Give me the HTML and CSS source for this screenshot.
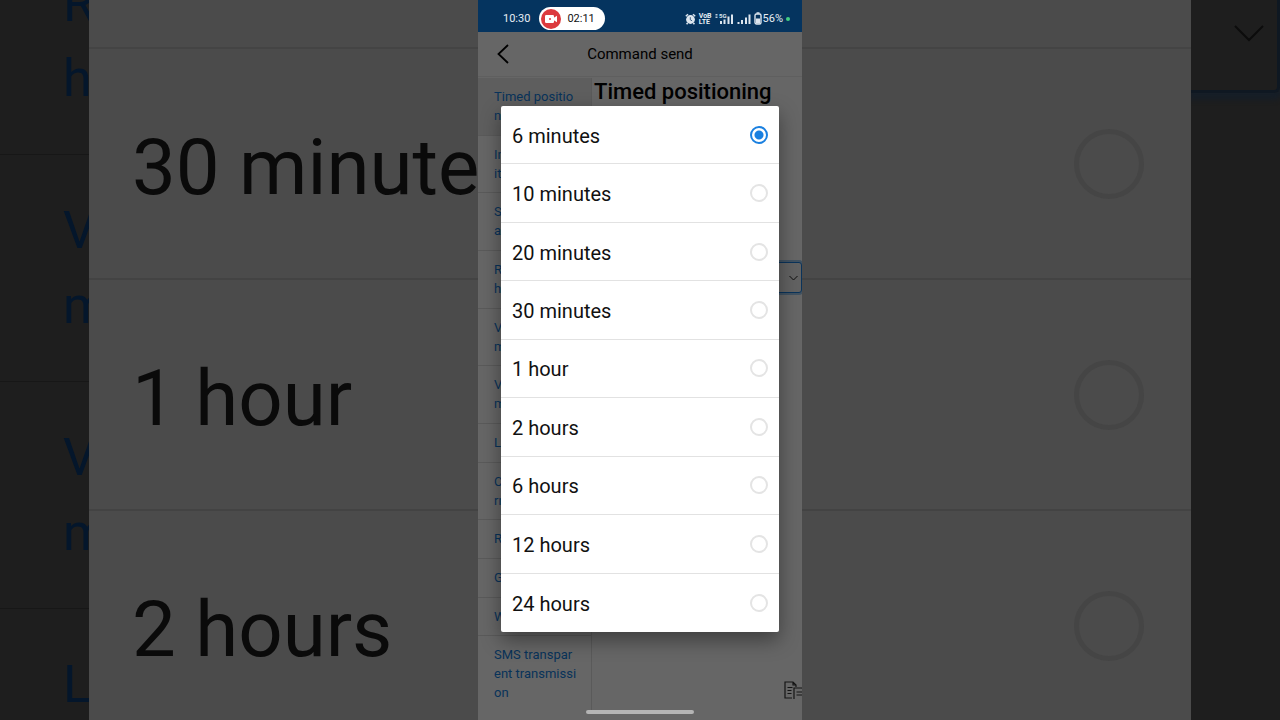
FILE: index.html
```html
<!DOCTYPE html>
<html lang="en">

<head>
    <meta charset="UTF-8">
    <meta name="viewport" content="width=device-width, initial-scale=1.0">
    <title>Command send</title>
    <link rel="stylesheet" href="styles.css">
</head>

<body>
    <div class="backdrop">
        <ul class="backdropMenu">
            <li>R<br>h</li>
            <li>V<br>m</li>
            <li>V<br>m</li>
            <li>L</li>
        </ul>
        <div class="backdropList">
            <div class="backdropTop"></div>
            <label class="backdropRow"><span>30 minutes</span> <input type="radio" class="radio" name="backdrop" disabled></label>
            <label class="backdropRow"><span>1 hour</span> <input type="radio" class="radio" name="backdrop" disabled></label>
            <label class="backdropRow"><span>2 hours</span> <input type="radio" class="radio" name="backdrop" disabled></label>
        </div>
        <div class="backdropSide">
            <div class="backdropSelect">
                <svg width="32" height="32" viewBox="0 0 32 32">
                    <path d="M2 9l14 14L30 9" fill="none" stroke="#0c0c0c" stroke-width="2" />
                </svg>
            </div>
        </div>
    </div>

    <div class="phone">
        <div class="statusBar">
            <span class="time">10:30</span>
            <div class="recording">
                <svg width="20" height="20" viewBox="0 0 20 20">
                    <circle cx="10" cy="10" r="10" fill="#dc3a3e" />
                    <rect x="4" y="6" width="9" height="8" rx="1.2" fill="#fff" />
                    <path d="M12 9.3l4-2.5v6.4l-4-2.5z" fill="#fff" />
                    <circle cx="9" cy="10" r="1" fill="#dc3a3e" />
                </svg>
                <span>02:11</span>
            </div>
            <div class="statusIcons">
                <svg width="11" height="12" viewBox="0 0 11 12">
                    <circle cx="5.5" cy="6.5" r="4.4" fill="#dde6ef" />
                    <path d="M.8 3.2L3 1.2M10.2 3.2L8 1.2M2.6 10l-1 1.3M8.4 10l1 1.3" stroke="#dde6ef" stroke-width="1.5" />
                    <path d="M5.3 4.2v2.6l1.8 1" fill="none" stroke="#3c5f82" stroke-width="1" />
                </svg>
                <span class="volte">VoB<br>LTE</span>
                <svg class="mobile" width="19" height="12" viewBox="0 0 19 12">
                    <path d="M1.5 1v1.5M1.5 3.5V5" stroke="#b9c9d9" stroke-width="2" />
                    <text x="4" y="5" class="network">5G</text>
                    <path d="M6 11V8M9.5 11V6.5M13.5 11V3.5M17 11V1.5" stroke="#dde6ef" stroke-width="2" />
                </svg>
                <svg width="14" height="12" viewBox="0 0 14 12">
                    <path d="M1.5 11V9M5 11V7M9 11V4.5M12.5 11V1.5" stroke="#dde6ef" stroke-width="2" />
                </svg>
                <svg class="battery" width="8" height="13" viewBox="0 0 8 13">
                    <path d="M2.5 1h3" stroke="#dde6ef" stroke-width="1.5" />
                    <rect x="1" y="2" width="6" height="10" rx="1.5" fill="none" stroke="#dde6ef" stroke-width="1.4" />
                    <rect x="2" y="6.5" width="4" height="5" fill="#dde6ef" />
                </svg>
                <span class="percent">56%</span>
                <span class="dot"></span>
            </div>
        </div>

        <header class="navBar">
            <button class="back" aria-label="Back">
                <svg width="12" height="20" viewBox="0 0 12 20">
                    <path d="M11 1L1.5 10 11 19" fill="none" stroke="#000" stroke-width="1.8" />
                </svg>
            </button>
            <span class="title">Command send</span>
        </header>

        <main class="page">
            <nav class="menu">
                <a href="#" class="active">Timed positioning</a>
                <a href="#">In<br>it</a>
                <a href="#">S<br>a</a>
                <a href="#">R<br>h</a>
                <a href="#">V<br>m</a>
                <a href="#">V<br>m</a>
                <a href="#">L</a>
                <a href="#">C<br>rn</a>
                <a href="#">R</a>
                <a href="#">G</a>
                <a href="#">W</a>
                <a href="#">SMS transparent transmission</a>
            </nav>
            <section class="content">
                <h1>Timed positioning</h1>
                <div class="field">
                    <select aria-label="Timed positioning"></select>
                    <svg width="9" height="6" viewBox="0 0 9 6">
                        <path d="M.5 1l4 4 4-4" fill="none" stroke="#222" stroke-width="1" />
                    </svg>
                </div>
                <button class="copy" aria-label="Copy">
                    <svg width="24" height="19" viewBox="0 0 24 19">
                        <path d="M8 17H1V1h8l3 3v2M9 1v3h3M3.5 6.5h5M3.5 9.5h4M3.5 12.5h4M10 18V7h8l4 3v8M12.5 11h7M12.5 14h7"
                            fill="none" stroke="#333" stroke-width="1.2" />
                    </svg>
                </button>
            </section>
        </main>

        <div class="scrim">
            <div class="dialog" role="dialog" aria-label="Timed positioning">
                <label class="option"><span>6 minutes</span> <input type="radio" class="radio" name="interval" checked></label>
                <label class="option"><span>10 minutes</span> <input type="radio" class="radio" name="interval"></label>
                <label class="option"><span>20 minutes</span> <input type="radio" class="radio" name="interval"></label>
                <label class="option"><span>30 minutes</span> <input type="radio" class="radio" name="interval"></label>
                <label class="option"><span>1 hour</span> <input type="radio" class="radio" name="interval"></label>
                <label class="option"><span>2 hours</span> <input type="radio" class="radio" name="interval"></label>
                <label class="option"><span>6 hours</span> <input type="radio" class="radio" name="interval"></label>
                <label class="option"><span>12 hours</span> <input type="radio" class="radio" name="interval"></label>
                <label class="option"><span>24 hours</span> <input type="radio" class="radio" name="interval"></label>
            </div>
            <div class="homeBar"></div>
        </div>
    </div>
</body>

</html>
```
FILE: styles.css
```css
:root {
    --status: #05345f;
    --link: #1480e0;
    --accent: #1a80e0;
    --line: #e2e2e2;
    --dark: #1e1e1e;
    --panel: #4b4b4b;
    --font: Roboto, "Liberation Sans", sans-serif;
}

* {
    box-sizing: border-box;
}

body {
    margin: 0;
    height: 100vh;
    display: grid;
    grid-template: 100vh / 1fr;
    overflow: hidden;
    font-family: var(--font);
    background-color: var(--dark);
}

/* The backdrop and the phone share one grid cell */
.backdrop,
.phone {
    grid-area: 1 / 1;
    overflow: hidden;
}

button {
    padding: 0;
    border: 0;
    background: none;
}

svg {
    display: block;
    flex: none;
}

.radio {
    appearance: none;
    margin: 0;
    flex: none;
    border-radius: 50%;
}

/* Enlarged backdrop */
.backdrop {
    display: grid;
    grid-template-columns: 89px 1fr 89px;
}

.backdropMenu {
    list-style: none;
    margin: -72px 0 0;
    padding: 0;
    overflow: hidden;
    color: #04162b;
    font-size: 52px;
    line-height: 75px;
}

.backdropMenu li {
    padding: 38px 0 38px 63px;
    border-bottom: 1px solid #171717;
}

.backdropList {
    background-color: var(--panel);
    min-width: 0;
}

.backdropTop {
    height: 49px;
    border-bottom: 2px solid #444;
}

.backdropRow {
    display: flex;
    align-items: center;
    justify-content: space-between;
    height: 231px;
    padding: 0 47px 0 43px;
    border-bottom: 2px solid #434343;
    color: #0a0a0a;
    font-size: 78px;
}

.backdropRow span {
    padding-top: 8px;
}

.backdropRow .radio {
    width: 70px;
    height: 70px;
    border: 5px solid #454545;
}

.backdropSide {
    overflow: hidden;
}

.backdropSelect {
    display: flex;
    justify-content: flex-end;
    height: 93px;
    padding: 17px 12px 0 0;
    border: solid #0f1822;
    border-width: 0 3px 3px 0;
    border-radius: 0 0 6px 0;
    box-shadow: 0 4px 5px 3px #161e27;
}

/* Phone */
.phone {
    position: relative;
    justify-self: center;
    width: 324px;
    display: flex;
    flex-direction: column;
    background-color: #fff;
}

.statusBar {
    display: flex;
    align-items: center;
    height: 32px;
    padding: 5px 12px 0 25px;
    background-color: var(--status);
    color: #e6edf4;
    font-size: 11px;
}

.recording {
    display: flex;
    align-items: center;
    gap: 6px;
    height: 23px;
    margin-left: 9px;
    padding: 0 10px 0 2px;
    border-radius: 12px;
    background-color: #fff;
    color: #111;
}

.statusIcons {
    display: flex;
    align-items: center;
    gap: 3px;
    margin-left: auto;
}

.volte {
    font-size: 7px;
    font-weight: 700;
    line-height: 6px;
}

.network {
    fill: #dde6ef;
    font-size: 6px;
    font-weight: 700;
}

.battery {
    margin-right: -2px;
}

.dot {
    width: 4px;
    height: 4px;
    border-radius: 50%;
    background-color: #43cf83;
}

.navBar {
    display: grid;
    grid-template-columns: 50px 1fr 50px;
    align-items: center;
    height: 45px;
    border-bottom: 1px solid #eee;
    font-size: 15px;
}

.back {
    justify-self: center;
}

.title {
    text-align: center;
}

.page {
    flex: 1;
    display: flex;
    min-height: 0;
    padding: 1px 0 8px;
}

.menu {
    display: flex;
    flex-direction: column;
    width: 114px;
    border-right: 1px solid var(--line);
}

.menu a {
    flex: 1 0 auto;
    padding: 9px 14px 9px 16px;
    border-bottom: 1px solid var(--line);
    color: var(--link);
    font-size: 13px;
    line-height: 19px;
    text-decoration: none;
    word-break: break-all;
}

.menu a:last-child {
    border-bottom: 0;
}

.menu .active {
    background-color: #ececec;
}

.content {
    flex: 1;
    display: flex;
    flex-direction: column;
    min-width: 0;
}

h1 {
    margin: 0;
    padding-left: 2px;
    font-size: 22px;
    font-weight: 500;
    line-height: 28px;
    white-space: nowrap;
}

.field {
    display: grid;
    align-items: center;
    margin-top: 156px;
}

.field select,
.field svg {
    grid-area: 1 / 1;
}

.field select {
    appearance: none;
    width: 100%;
    height: 31px;
    border: 1px solid var(--accent);
    border-radius: 3px;
    background-color: #f4f4f4;
    box-shadow: 0 0 0 2px #a3cdf2;
}

.field svg {
    justify-self: end;
    margin-right: 4px;
}

.copy {
    align-self: flex-end;
    margin: auto -6px 12px 0;
}

/* Dims the page below the status bar */
.scrim {
    position: absolute;
    inset: 32px 0 0;
    display: flex;
    flex-direction: column;
    padding: 74px 23px 6px;
    background-color: rgba(0, 0, 0, 0.6);
}

.dialog {
    flex: 1;
    display: grid;
    grid-auto-rows: 1fr;
    margin-bottom: 78px;
    border-radius: 2px;
    background-color: #fff;
    box-shadow: 0 8px 20px rgba(0, 0, 0, 0.4);
}

.option {
    display: flex;
    align-items: center;
    justify-content: space-between;
    padding: 0 11px;
    border-bottom: 1px solid var(--line);
    color: #111;
    font-size: 20px;
}

.option span {
    padding-top: 2px;
}

.option:last-child {
    border-bottom: 0;
}

.option .radio {
    width: 18px;
    height: 18px;
    border: 2px solid #e4e4e4;
}

.option .radio:checked {
    border-color: var(--accent);
    background: radial-gradient(circle, var(--accent) 4px, #fff 5px);
}

.homeBar {
    align-self: center;
    width: 108px;
    height: 4px;
    border-radius: 2px;
    background-color: #b4b4b4;
}
```
